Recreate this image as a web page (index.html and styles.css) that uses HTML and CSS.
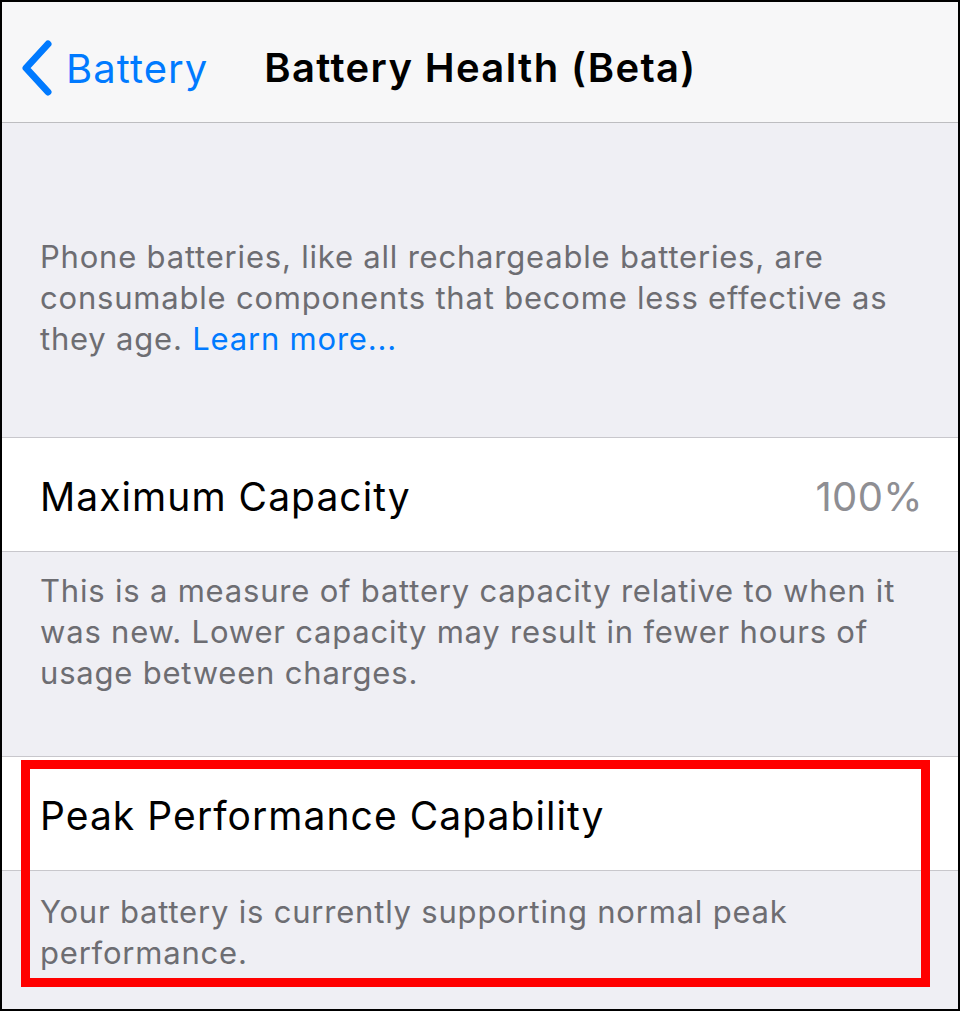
FILE: index.html
```html
<!DOCTYPE html>
<html>
<head>
<meta charset="utf-8">
<link rel="stylesheet" href="styles.css">
</head>
<body>
<div class="screen">
  <header class="nav">
    <div class="back">
      <svg class="chev" width="34" height="56" viewBox="0 0 34 56"><path d="M28 4 L6 28 L28 52" fill="none" stroke="#007aff" stroke-width="7" stroke-linecap="round" stroke-linejoin="round"/></svg>
      <span class="back-label">Battery</span>
    </div>
    <div class="title">Battery Health (Beta)</div>
  </header>
  <main class="content">
    <p class="intro">Phone batteries, like all rechargeable batteries, are consumable components that become less effective as they age. <span class="link">Learn more...</span></p>
    <div class="cell">
      <span class="cell-label">Maximum Capacity</span>
      <span class="cell-value">100%</span>
    </div>
    <p class="footer">This is a measure of battery capacity relative to when it was new. Lower capacity may result in fewer hours of usage between charges.</p>
    <div class="group">
      <div class="cell">
        <span class="cell-label">Peak Performance Capability</span>
      </div>
      <p class="footer">Your battery is currently supporting normal peak performance.</p>
      <div class="highlight"></div>
    </div>
  </main>
</div>
</body>
</html>
```
FILE: styles.css
```css
html, body {
  margin: 0;
  padding: 0;
  background: #000;
}
body {
  padding: 2px;
  width: 956px;
  height: 1007px;
  font-family: Inter, "Noto Sans", sans-serif;
}
.screen {
  width: 956px;
  height: 1007px;
  background: #efeff4;
  overflow: hidden;
  position: relative;
}
.nav {
  height: 120px;
  background: #f7f7f8;
  border-bottom: 1px solid #bdbdc0;
  display: flex;
  align-items: center;
  position: relative;
}
.back {
  display: flex;
  align-items: center;
  padding-left: 18px;
  gap: 12px;
  margin-top: 12px;
}
.chev {
  display: block;
}
.back-label {
  color: #007aff;
  font-size: 40px;
  letter-spacing: 1.05px;
}
.title {
  margin-left: 56px;
  margin-top: 10px;
  font-size: 40px;
  font-weight: 600;
  color: #000;
  letter-spacing: 1.35px;
}
.content {
  display: flex;
  flex-direction: column;
}
.intro, .footer {
  margin: 0;
  color: #6d6d72;
  font-size: 31px;
  line-height: 41px;
  letter-spacing: 0.8px;
  padding: 0 36px 0 38px;
}
.intro {
  padding-top: 113px;
  padding-bottom: 78px;
}
.link {
  color: #007aff;
}
.cell {
  height: 113px;
  box-sizing: content-box;
  background: #fff;
  border-top: 1px solid #c8c7cc;
  border-bottom: 1px solid #c8c7cc;
  display: flex;
  align-items: center;
  justify-content: space-between;
  padding: 0 35px 0 38px;
}
.cell-label, .cell-value {
  margin-top: 4px;
}
.cell-label {
  font-size: 39px;
  color: #000;
  letter-spacing: 1.05px;
}
.cell-value {
  font-size: 40px;
  color: #8e8e93;
  letter-spacing: 0.4px;
}
.content > .footer {
  padding-top: 18px;
  padding-bottom: 63px;
}
.group {
  position: relative;
}
.group .footer {
  padding-top: 20px;
}
.highlight {
  position: absolute;
  left: 19px;
  top: 4px;
  width: 891px;
  height: 209px;
  border: 9px solid #ff0000;
}
```
